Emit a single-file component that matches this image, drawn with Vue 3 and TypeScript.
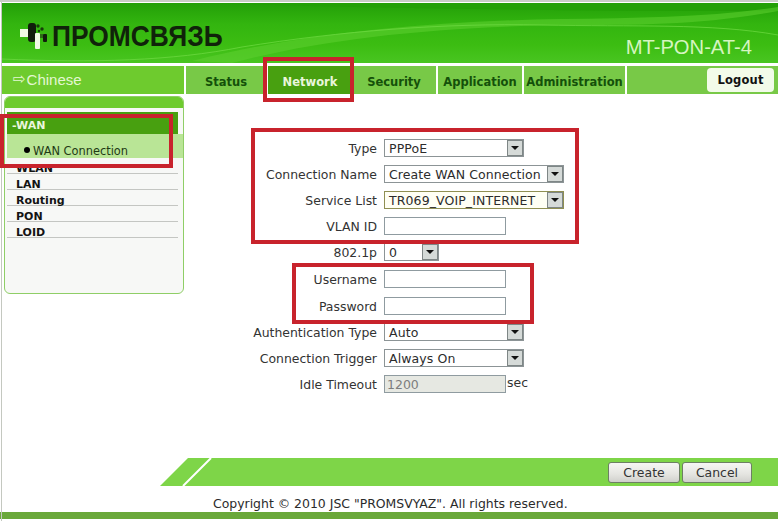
<template>
  <div class="page">
    <header class="banner">
      <svg class="waves" viewBox="0 0 776 60" preserveAspectRatio="none">
        <path d="M200 0 C330 4 520 8 776 8 L776 0 Z" fill="#23a006" />
        <path d="M190 58 C300 30 430 18 560 16 C640 15 710 14 776 4 L776 8 C700 22 640 22 560 22 C430 24 320 36 230 60 Z" fill="#5fd031" opacity="0.55" />
        <path d="M0 56 C90 60 170 58 240 44 C340 28 440 20 540 22 C630 24 710 20 776 32" fill="none" stroke="#70dc45" stroke-width="1" opacity="0.7" />
      </svg>
      <div class="logo">
        <svg class="logo-mark" viewBox="0 0 32 30" aria-hidden="true">
          <rect x="0" y="7" width="9" height="8" fill="#f0fae4" />
          <rect x="8" y="1" width="8" height="19" rx="3" fill="#111d0c" />
          <rect x="15" y="11" width="5" height="16" rx="1" fill="#f0fae4" />
          <rect x="20" y="12" width="3" height="4" fill="#2d6d14" />
          <rect x="23" y="12" width="4" height="8" rx="1" fill="#111d0c" />
          <circle cx="18" cy="4" r="1.7" fill="#173c0a" />
          <circle cx="22" cy="7" r="1.7" fill="#173c0a" />
          <circle cx="19" cy="9" r="1.2" fill="#173c0a" />
        </svg>
        <span class="logo-text">ПРОМСВЯЗЬ</span>
      </div>
      <div class="model">MT-PON-AT-4</div>
    </header>

    <nav class="nav">
      <div class="lang"><span class="arrow">⇨</span>Chinese</div>
      <div class="tabs">
        <a
          v-for="tab in tabs"
          :key="tab.label"
          class="tab"
          :class="{ active: tab.label === 'Network' }"
          :style="{ width: tab.width + 'px' }"
        >{{ tab.label }}</a>
        <div class="tab-rest"><button class="logout">Logout</button></div>
      </div>
    </nav>

    <div class="body">
      <aside class="side">
        <div class="side-top"></div>
        <div class="menu">
          <div class="menu-head">-WAN</div>
          <div class="menu-sub"><i class="dot"></i>WAN Connection</div>
          <div v-for="item in menu" :key="item" class="menu-item">{{ item }}</div>
        </div>
      </aside>

      <main class="main">
        <form class="form">
          <template v-for="row in rows" :key="row.label">
            <label class="row-label">{{ row.label }}</label>
            <div class="row-field">
              <div v-if="row.select" class="select" :class="{ focus: row.focus }" :style="{ width: row.width + 'px' }">
                <span class="select-val">{{ row.value }}</span>
                <span class="select-btn"><i></i></span>
              </div>
              <div v-else class="input" :class="{ disabled: row.disabled }" :style="{ width: row.width + 'px' }">{{ row.value }}</div>
              <span v-if="row.unit" class="unit">{{ row.unit }}</span>
            </div>
          </template>
        </form>
      </main>
    </div>

    <div class="action-bar">
      <svg class="slant" viewBox="0 0 56 28" aria-hidden="true">
        <path d="M2 28 L30 0 L56 0 L56 28 Z" fill="#7ed548" />
        <path d="M25 28 L53 0" stroke="#fff" stroke-width="2" fill="none" />
      </svg>
      <div class="action-fill">
        <button class="btn create">Create</button>
        <button class="btn">Cancel</button>
      </div>
    </div>

    <footer class="copy">Copyright © 2010 JSC "PROMSVYAZ". All rights reserved.</footer>
    <div class="bottom"></div>

    <!-- red annotation boxes drawn over the screenshot -->
    <div class="mark m-tab"></div>
    <div class="mark m-wan"></div>
    <div class="mark m-form"></div>
    <div class="mark m-user"></div>
  </div>
</template>

<script setup lang="ts">
interface Row {
  label: string;
  value: string;
  width: number;
  select?: boolean;
  focus?: boolean;
  disabled?: boolean;
  unit?: string;
}

const tabs = [
  { label: 'Status', width: 80 },
  { label: 'Network', width: 82 },
  { label: 'Security', width: 84 },
  { label: 'Application', width: 84 },
  { label: 'Administration', width: 101 },
];

const menu = ['WLAN', 'LAN', 'Routing', 'PON', 'LOID'];

const rows: Row[] = [
  { label: 'Type', value: 'PPPoE', width: 140, select: true },
  { label: 'Connection Name', value: 'Create WAN Connection', width: 180, select: true },
  { label: 'Service List', value: 'TR069_VOIP_INTERNET', width: 180, select: true, focus: true },
  { label: 'VLAN ID', value: '', width: 122 },
  { label: '802.1p', value: '0', width: 55, select: true },
  { label: 'Username', value: '', width: 122 },
  { label: 'Password', value: '', width: 122 },
  { label: 'Authentication Type', value: 'Auto', width: 140, select: true },
  { label: 'Connection Trigger', value: 'Always On', width: 140, select: true },
  { label: 'Idle Timeout', value: '1200', width: 122, disabled: true, unit: 'sec' },
];
</script>

<style>
html,
body {
  margin: 0;
  background: #fff;
}
</style>

<style scoped>
.page {
  position: relative;
  width: 778px;
  height: 521px;
  overflow: hidden;
  background: #fff;
  border-top: 2px solid #c9cdc6;
  box-sizing: border-box;
  font-family: "DejaVu Sans", Verdana, sans-serif;
  color: #2b2b2b;
}

.page::before {
  content: "";
  position: absolute;
  left: 1px;
  top: 0;
  bottom: 0;
  width: 1px;
  background: #c4c8c0;
}

.banner {
  position: relative;
  height: 60px;
  margin: 1px 0 3px 2px;
  display: flex;
  align-items: flex-start;
  justify-content: space-between;
  overflow: hidden;
  background: linear-gradient(180deg, #239f08 0%, #33b50f 35%, #3cbd12 70%, #49c521 100%);
}

.waves {
  position: absolute;
  inset: 0;
  width: 100%;
  height: 100%;
}

.logo {
  position: relative;
  display: flex;
  align-items: center;
  margin: 19px 0 0 18px;
}

.logo-mark {
  width: 32px;
  height: 30px;
}

.logo-text {
  font-family: "Liberation Sans", Arial, sans-serif;
  font-weight: 700;
  font-size: 30px;
  line-height: 28px;
  margin-top: -2px;
  color: #10230a;
  transform: scaleX(0.88);
  transform-origin: left center;
}

.model {
  position: relative;
  margin: 33px 26px 0 0;
  font-family: "Liberation Sans", Arial, sans-serif;
  font-size: 20.2px;
  line-height: 22px;
  color: #d6f5c0;
}

.nav {
  display: flex;
  height: 28px;
  margin-left: 2px;
}

.lang {
  width: 182px;
  display: flex;
  align-items: center;
  padding: 0 0 2px 11px;
  box-sizing: border-box;
  background: #6ecb2e;
  color: #e4f7d2;
  font-family: "Liberation Sans", Arial, sans-serif;
  font-size: 15px;
}

.arrow {
  font-family: "DejaVu Sans", sans-serif;
  font-size: 15px;
  margin-right: 1px;
}

.tabs {
  flex: 1;
  display: flex;
  gap: 2px;
  margin-left: 2px;
}

.tab {
  display: flex;
  align-items: center;
  justify-content: center;
  background: #78c947;
  color: #14500a;
  font-size: 11.5px;
  font-weight: 700;
  padding-top: 4px;
  box-sizing: border-box;
}

.tab.active {
  background: #48a010;
  color: #eaf6dc;
  padding-left: 2px;
}

.tab-rest {
  flex: 1;
  background: #78c947;
  display: flex;
  justify-content: flex-end;
  align-items: center;
  padding-right: 4px;
}

.logout {
  width: 67px;
  height: 24px;
  padding: 0;
  border: 0;
  border-radius: 4px;
  background: #f2fbe9;
  color: #111;
  font-family: inherit;
  font-size: 11.5px;
  font-weight: 700;
  letter-spacing: 0.2px;
}

.body {
  display: flex;
  height: 364px;
  padding-top: 2px;
  box-sizing: border-box;
}

.side {
  width: 180px;
  height: 198px;
  margin-left: 4px;
  box-sizing: border-box;
  border: 1px solid #8fce66;
  border-radius: 6px;
  background: #f7f8f6;
  overflow: hidden;
  flex: none;
}

.side-top {
  height: 11px;
  background: #6ecb2e;
}

.menu {
  padding: 4px 5px 0 2px;
}

.menu-head {
  height: 22px;
  line-height: 28px;
  padding-left: 5px;
  background: #48a010;
  color: #eaf6dc;
  font-size: 11px;
  font-weight: 700;
}

.menu-sub {
  display: flex;
  align-items: center;
  height: 24px;
  padding: 10px 0 0 17px;
  margin-right: -5px;
  box-sizing: border-box;
  background: #b9e596;
  color: #1f3a15;
  font-size: 11.4px;
}

.dot {
  width: 6px;
  height: 6px;
  margin: -2px 3px 0 0;
  border-radius: 50%;
  background: #000;
}

.menu-item {
  height: 16px;
  line-height: 22px;
  padding-left: 9px;
  box-sizing: border-box;
  border-bottom: 1px solid #c4c6c2;
  color: #141414;
  font-size: 11px;
  font-weight: 700;
}

.main {
  flex: 1;
  min-width: 0;
  padding-top: 39px;
}

.form {
  display: grid;
  grid-template-columns: 193px 1fr;
  grid-template-rows: repeat(5, 26px) 28px repeat(4, 26px);
  column-gap: 7px;
  align-items: center;
}

.row-label {
  padding-top: 1px;
  text-align: right;
  font-size: 12.45px;
  color: #333;
  white-space: nowrap;
}

.row-field {
  display: flex;
  align-items: center;
}

.select {
  display: flex;
  height: 18px;
  box-sizing: border-box;
  border: 1px solid #8c9496;
  background: #fff;
  font-size: 12.5px;
  line-height: 18px;
  letter-spacing: 0.1px;
  color: #2c2c2c;
}

.select.focus {
  border-color: #8f8f52;
  background: #fffff4;
}

.select-val {
  flex: 1;
  padding-left: 4px;
  white-space: nowrap;
  overflow: hidden;
}

.select-btn {
  flex: none;
  width: 16px;
  height: 16px;
  box-sizing: border-box;
  border: 1px solid #7e8686;
  background: #d5dad8;
  display: flex;
  align-items: center;
  justify-content: center;
}

.select-btn i {
  width: 0;
  height: 0;
  border-left: 4px solid transparent;
  border-right: 4px solid transparent;
  border-top: 4px solid #111;
}

.input {
  height: 18px;
  box-sizing: border-box;
  border: 1px solid #8f9ba0;
  background: #fff;
  font-size: 12.5px;
  line-height: 18px;
  padding-left: 2px;
}

.input.disabled {
  background: #e6e8e2;
  color: #7d7d7d;
}

.unit {
  margin: -4px 0 0 1px;
  font-size: 12.45px;
  color: #333;
}

.action-bar {
  display: flex;
  height: 28px;
  margin-left: 158px;
}

.slant {
  width: 56px;
  height: 28px;
  flex: none;
}

.action-fill {
  flex: 1;
  background: #7ed548;
  display: flex;
  justify-content: flex-end;
  align-items: center;
  gap: 2px;
  padding: 0 26px 0 0;
}

.btn {
  width: 70px;
  height: 21px;
  padding: 1px 0 0;
  border: 1px solid #6d7f64;
  border-radius: 3px;
  background: linear-gradient(180deg, #f6f6f4 0%, #e4e4e0 60%, #d0d0cc 100%);
  color: #333;
  font-family: inherit;
  font-size: 12.45px;
}

.btn.create {
  width: 72px;
}

.copy {
  height: 26px;
  line-height: 35px;
  padding-left: 213px;
  font-size: 12.45px;
  color: #2b2b2b;
}

.bottom {
  height: 7px;
  background: #6aa83a;
}

.mark {
  position: absolute;
  box-sizing: border-box;
  border: 4px solid #c8232c;
  pointer-events: none;
}

.m-tab {
  left: 263px;
  top: 55px;
  width: 91px;
  height: 45px;
}

.m-wan {
  left: 0;
  top: 112px;
  width: 173px;
  height: 54px;
}

.m-form {
  left: 251px;
  top: 126px;
  width: 328px;
  height: 116px;
}

.m-user {
  left: 292px;
  top: 261px;
  width: 242px;
  height: 61px;
}
</style>
